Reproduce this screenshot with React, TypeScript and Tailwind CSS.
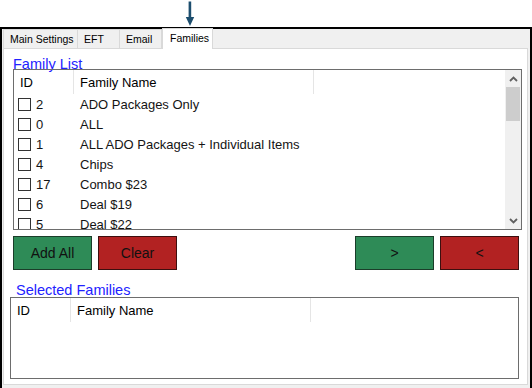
const families = [
  { id: 2, name: 'ADO Packages Only' },
  { id: 0, name: 'ALL' },
  { id: 1, name: 'ALL ADO Packages + Individual Items' },
  { id: 4, name: 'Chips' },
  { id: 17, name: 'Combo $23' },
  { id: 6, name: 'Deal $19' },
  { id: 5, name: 'Deal $22' },
];

const tabs = [
  { label: 'Main Settings', width: 'w-[75px]' },
  { label: 'EFT', width: 'w-[42px]' },
  { label: 'Email', width: 'w-[42px]' },
];

function Chevron({ dir }: { dir: 'up' | 'down' }) {
  return (
    <svg width="9" height="6" viewBox="0 0 9 6">
      <polyline
        points={dir === 'up' ? '1,5 4.5,1.5 8,5' : '1,1 4.5,4.5 8,1'}
        fill="none"
        stroke="#606060"
        strokeWidth="1.8"
      />
    </svg>
  );
}

function ListHeader() {
  return (
    <div className="flex h-[24px] shrink-0 text-[13px] text-black">
      <div className="flex h-full w-[60px] items-center border-r border-[#e5e5e5] pl-[6px] pt-[1px]">ID</div>
      <div className="flex h-full w-[240px] items-center border-r border-[#e5e5e5] pl-[6px] pt-[1px]">Family Name</div>
    </div>
  );
}

function ActionButton({ label, tone }: { label: string; tone: 'green' | 'red' }) {
  return (
    <button
      className={
        tone === 'green'
          ? 'h-[34px] w-[79px] border border-[#1b3d2a] bg-[#2e8b57] text-[14px] text-[#111]'
          : 'h-[34px] w-[79px] border border-[#3d0f0f] bg-[#b22222] text-[14px] text-[#111]'
      }
    >
      {label}
    </button>
  );
}

export default function App() {
  return (
    <div className="relative h-[388px] w-[532px] overflow-hidden bg-white font-['Liberation_Sans',Arial,sans-serif]">
      {/* pointer arrow above the Families tab */}
      <svg className="absolute left-[185px] top-0" width="10" height="27" viewBox="0 0 10 27">
        <rect x="3.6" y="1.5" width="2.6" height="16" fill="#1d4e6e" />
        <polygon points="0.8,17 9.2,17 5,26" fill="#1d4e6e" />
      </svg>

      <div className="mt-[27px] flex h-[361px] flex-col border-x-2 border-t-2 border-black bg-[#f0f0f0] pl-[1px] pr-[2px]">
        {/* tab strip */}
        <div className="flex h-[19px] shrink-0 items-end">
          {tabs.map((t) => (
            <div
              key={t.label}
              className={`${t.width} flex h-[19px] items-center border-r border-t border-[#d9d9d9] pl-[6px] pt-[2px] text-[10.5px] text-black first:border-l`}
            >
              {t.label}
            </div>
          ))}
          <div className="relative z-10 -mb-[1px] flex h-[21px] w-[51px] items-center border-x border-t border-[#d9d9d9] bg-white pl-[7px] text-[10.5px] text-black">
            Families
          </div>
        </div>

        {/* tab page */}
        <div className="flex h-[337px] shrink-0 flex-col border border-[#d9d9d9] bg-white">
          <div className="ml-[9px] mt-[6px] h-[14px] pt-[1px] text-[14.5px] leading-[16px] text-[#2222ff]">Family List</div>

          <div className="ml-[9px] flex h-[161px] w-[509px] shrink-0 border border-[#6d6d6d]">
            <div className="flex flex-1 flex-col overflow-hidden">
              <ListHeader />
              {families.map((f) => (
                <div key={f.id} className="flex h-[20px] shrink-0 items-center text-[13px] text-[#141414]">
                  <div className="flex w-[60px] items-center pl-[4px]">
                    <span className="h-[13px] w-[13px] border border-[#333] bg-white" />
                    <span className="ml-[5px] pt-[1px]">{f.id}</span>
                  </div>
                  <div className="pl-[6px] pt-[1px]">{f.name}</div>
                </div>
              ))}
            </div>
            <div className="flex w-[16px] flex-col bg-[#f0f0f0]">
              <div className="flex h-[17px] items-center justify-center">
                <Chevron dir="up" />
              </div>
              <div className="mx-[1px] h-[34px] bg-[#cdcdcd]" />
              <div className="flex-1" />
              <div className="flex h-[17px] items-center justify-center">
                <Chevron dir="down" />
              </div>
            </div>
          </div>

          <div className="ml-[9px] mt-[6px] flex w-[506px] gap-[6px]">
            <ActionButton label="Add All" tone="green" />
            <ActionButton label="Clear" tone="red" />
            <div className="flex-1" />
            <ActionButton label=">" tone="green" />
            <ActionButton label="<" tone="red" />
          </div>

          <div className="ml-[12px] mt-[12px] h-[15px] text-[14.5px] leading-[16px] text-[#2222ff]">Selected Families</div>

          <div className="ml-[6px] flex h-[82px] w-[509px] shrink-0 flex-col border border-[#6d6d6d]">
            <ListHeader />
          </div>
        </div>
      </div>
    </div>
  );
}
